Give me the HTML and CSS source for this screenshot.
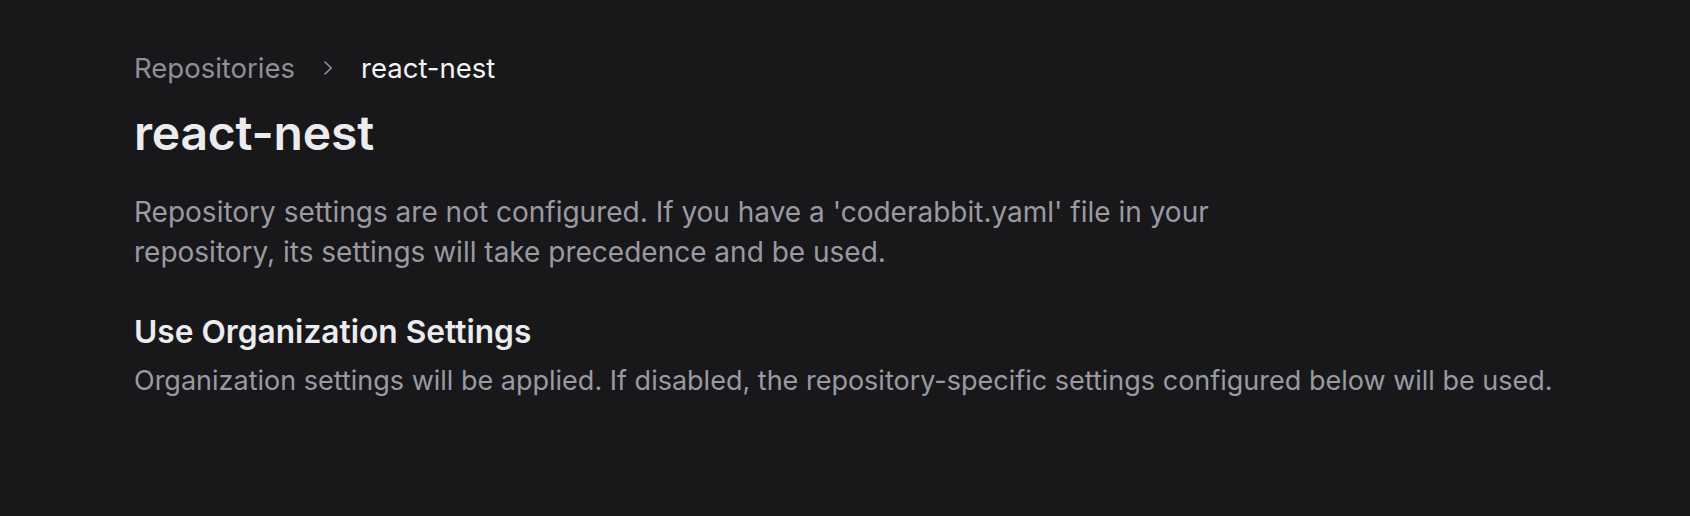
FILE: index.html
```html
<!DOCTYPE html>
<html lang="en">
<head>
<meta charset="utf-8">
<title>react-nest</title>
<link rel="stylesheet" href="styles.css">
</head>
<body>
<main class="page">
  <nav class="breadcrumb">
    <span class="crumb">Repositories</span>
    <svg class="chevron" width="12" height="16" viewBox="0 0 12 16" aria-hidden="true"><path d="M3 2 L9.2 8 L3 14" fill="none" stroke="currentColor" stroke-width="1.7" stroke-linecap="round" stroke-linejoin="round"/></svg>
    <span class="crumb current">react-nest</span>
  </nav>
  <h1 class="title">react-nest</h1>
  <p class="intro">Repository settings are not configured. If you have a 'coderabbit.yaml' file in your repository, its settings will take precedence and be used.</p>
  <section class="setting">
    <h2 class="setting-title">Use Organization Settings</h2>
    <p class="setting-desc">Organization settings will be applied. If disabled, the repository-specific settings configured below will be used.</p>
  </section>
</main>
</body>
</html>
```

FILE: styles.css
```css
html, body {
  margin: 0;
  padding: 0;
  background: #18181b;
  height: 100%;
}
body {
  font-family: Inter, "Noto Sans", sans-serif;
  color: #9a9aa2;
}
.page {
  padding: 50px 0 0 134px;
}
.breadcrumb {
  display: flex;
  align-items: center;
  gap: 27px;
  height: 36px;
}
.crumb {
  font-size: 27.5px;
  line-height: 36px;
  color: #8f8f97;
}
.crumb.current {
  color: #f4f4f5;
}
.chevron {
  color: #8f8f97;
  display: block;
}
.title {
  margin: 19px 0 0;
  font-size: 48px;
  line-height: 56px;
  font-weight: 600;
  color: #ececee;
  letter-spacing: -0.2px;
}
.intro {
  margin: 31px 0 0;
  max-width: 1152px;
  font-size: 28px;
  line-height: 40px;
}
.setting {
  margin-top: 40px;
}
.setting-title {
  margin: 0;
  font-size: 31.7px;
  line-height: 40px;
  font-weight: 600;
  color: #ececee;
}
.setting-desc {
  margin: 9px 0 0;
  font-size: 27px;
  line-height: 40px;
}
```
